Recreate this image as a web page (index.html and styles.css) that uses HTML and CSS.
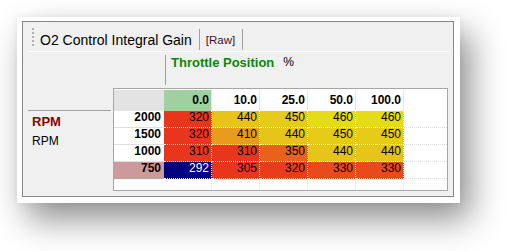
FILE: index.html
```html
<!DOCTYPE html>
<html>
<head>
<meta charset="utf-8">
<link rel="stylesheet" href="styles.css">
</head>
<body>
<div class="page">
<div class="frame">
  <div class="panel">
    <div class="tabbar">
      <span class="grip"></span>
      <span class="title">O2 Control Integral Gain</span>
      <span class="sep"></span>
      <span class="raw">[Raw]</span>
      <span class="sep"></span>
    </div>
    <div class="body">
      <div class="xaxis"><span class="xname">Throttle Position</span><span class="xunit">%</span></div>
      <div class="main">
        <div class="ylabels">
          <div class="yname">RPM</div>
          <div class="yunit">RPM</div>
        </div>
        <div class="gridbox">
          <div class="table">
            <div class="corner"></div>
            <div class="ch ch-sel">0.0</div>
            <div class="ch">10.0</div>
            <div class="ch">25.0</div>
            <div class="ch">50.0</div>
            <div class="ch">100.0</div>
            <div class="hfill"></div>

            <div class="rh">2000</div>
            <div class="c c-red">320</div>
            <div class="c c-y440">440</div>
            <div class="c c-y450">450</div>
            <div class="c c-y460">460</div>
            <div class="c c-y460">460</div>
            <div class="fill"></div>

            <div class="rh">1500</div>
            <div class="c c-red">320</div>
            <div class="c c-o410">410</div>
            <div class="c c-y440">440</div>
            <div class="c c-y450">450</div>
            <div class="c c-y450">450</div>
            <div class="fill"></div>

            <div class="rh">1000</div>
            <div class="c c-red">310</div>
            <div class="c c-red">310</div>
            <div class="c c-o350">350</div>
            <div class="c c-y440">440</div>
            <div class="c c-y440">440</div>
            <div class="fill"></div>

            <div class="rh rh-sel">750</div>
            <div class="c c-sel">292</div>
            <div class="c c-red">305</div>
            <div class="c c-red2">320</div>
            <div class="c c-o330">330</div>
            <div class="c c-o330">330</div>
            <div class="fill"></div>

            <div class="erh"></div>
            <div class="e"></div>
            <div class="e"></div>
            <div class="e"></div>
            <div class="e"></div>
            <div class="e"></div>
            <div class="efill"></div>
          </div>
        </div>
      </div>
    </div>
  </div>
</div>
</div>
</body>
</html>
```

FILE: styles.css
```css
* { box-sizing: border-box; }
html, body { margin: 0; padding: 0; background: #ffffff; }
body { font-family: "Liberation Sans", Arial, sans-serif; color: #000; }

.page {
  width: 508px;
  height: 251px;
  padding: 17px 0 0 17px;
  overflow: hidden;
}

.frame {
  width: 443px;
  height: 186px;
  padding: 4px 6px 6px 5px;
  background: #ffffff;
  box-shadow: 10px 16px 32px rgba(0, 0, 0, 0.45), 0 0 6px rgba(0, 0, 0, 0.06);
}

.panel {
  width: 432px;
  height: 176px;
  border: 1px solid #878787;
  background: #f0f0f0;
}

.tabbar {
  display: flex;
  align-items: flex-start;
  height: 30px;
  margin: 0 4px 0 5px;
  padding-left: 4px;
  border-bottom: 1px solid #ffffff;
}
.grip {
  width: 2px;
  height: 20px;
  margin-top: 6px;
  background-image: repeating-linear-gradient(to bottom, #b2b2b2 0, #b2b2b2 2px, transparent 2px, transparent 4px);
}
.title {
  margin-left: 6px;
  margin-top: 10px;
  font-size: 14px;
  line-height: 16px;
  white-space: nowrap;
}
.sep {
  width: 1px;
  height: 21px;
  margin-top: 7px;
  margin-left: 7px;
  background: #a0a0a0;
}
.raw {
  margin-left: 6px;
  margin-top: 12px;
  font-size: 11.5px;
  line-height: 13px;
  color: #3a1428;
}

.body {
  padding: 0 5px;
}
.xaxis {
  display: flex;
  align-items: flex-start;
  height: 30px;
  margin-top: 3px;
  margin-left: 137px;
  border-left: 1px solid #a0a0a0;
  padding-left: 5px;
}
.xname {
  font-size: 13px;
  line-height: 15px;
  font-weight: bold;
  color: #0a870a;
  white-space: nowrap;
}
.xunit {
  margin-left: 9px;
  font-size: 12px;
  line-height: 15px;
}

.main {
  display: flex;
  gap: 2px;
  margin-top: 3px;
}
.ylabels {
  width: 83px;
  margin-top: 22px;
  border-top: 1px solid #a0a0a0;
  padding-left: 4px;
}
.yname {
  margin-top: 3px;
  font-size: 13px;
  line-height: 15px;
  font-weight: bold;
  color: #8c0000;
}
.yunit {
  margin-top: 5px;
  font-size: 12px;
  line-height: 14px;
}

.gridbox {
  width: 335px;
  height: 103px;
  border: 1px solid #a6a6a6;
  background: #ffffff;
  padding-top: 1px;
  overflow: hidden;
}
.table {
  display: grid;
  grid-template-columns: 50px repeat(5, 48px) 1fr;
  grid-template-rows: 21px repeat(5, 17px);
  font-size: 12px;
  line-height: 13px;
}
.corner { background: #e3e3e3; }
.ch {
  text-align: right;
  font-weight: bold;
  padding: 4px 2px 0 0;
  border-right: 1px solid #e6e6e6;
}
.ch-sel { background: #a0d0a0; }

.rh {
  text-align: right;
  font-weight: bold;
  padding: 0 3px 0 0;
  border-bottom: 1px solid #e0e0e0;
}
.rh-sel { background: #cc9a9a; border-bottom-color: #cc9a9a; }

.c {
  text-align: right;
  padding: 0 2px 0 0;
  border-right: 1px dotted #ffffff;
  border-bottom: 1px dotted #ffffff;
}
.c-red { background: #e8361c; }
.c-red2 { background: #e83c1c; }
.c-o330 { background: #e84a1c; }
.c-o350 { background: #e8621c; }
.c-o410 { background: #e89c1c; }
.c-y440 { background: #e6c41a; }
.c-y450 { background: #e6cc18; }
.c-y460 { background: #e4dc16; }
.c-sel { background: #000080; color: #ffffff; }

.fill { border-bottom: 1px dotted #e0e0e0; }
.e { border-right: 1px dotted #e0e0e0; }
```
